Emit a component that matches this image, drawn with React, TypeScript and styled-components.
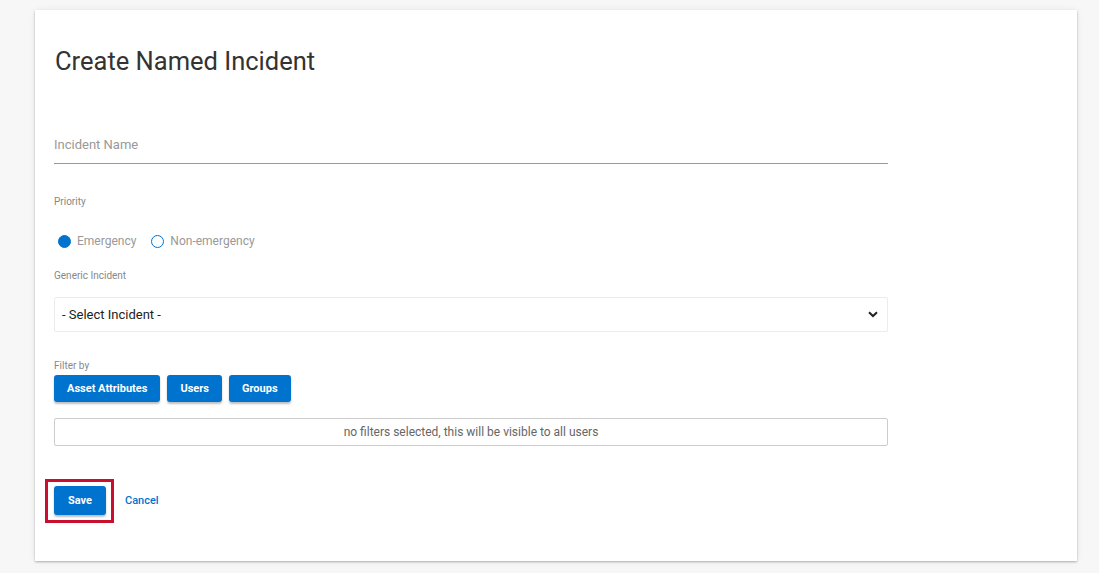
import styled, { createGlobalStyle } from "styled-components";

const GlobalStyle = createGlobalStyle`
  html, body {
    margin: 0;
    padding: 0;
    background-color: #f7f7f7;
    font-family: Roboto, "Liberation Sans", Arial, sans-serif;
  }
  * {
    box-sizing: border-box;
  }
`;

const FILTERS = ["Asset Attributes", "Users", "Groups"];

export default function App() {
  return (
    <>
      <GlobalStyle />
      <Page>
        <Card>
          <Title>Create Named Incident</Title>

          <NameInput placeholder="Incident Name" />

          <FieldLabel $top={32}>Priority</FieldLabel>
          <RadioRow>
            <RadioOption>
              <RadioDot $checked />
              Emergency
            </RadioOption>
            <RadioOption>
              <RadioDot $checked={false} />
              Non-emergency
            </RadioOption>
          </RadioRow>

          <FieldLabel $top={21}>Generic Incident</FieldLabel>
          <SelectWrap>
            <IncidentSelect defaultValue="">
              <option value="">- Select Incident -</option>
            </IncidentSelect>
            <Chevron viewBox="0 0 10 7" aria-hidden>
              <path d="M1 1.2 L5 5 L9 1.2" fill="none" stroke="#222" strokeWidth="2" />
            </Chevron>
          </SelectWrap>

          <FieldLabel $top={28}>Filter by</FieldLabel>
          <FilterButtons>
            {FILTERS.map((label) => (
              <PrimaryButton key={label}>{label}</PrimaryButton>
            ))}
          </FilterButtons>

          <FilterSummary>
            no filters selected, this will be visible to all users
          </FilterSummary>

          <Actions>
            <Highlight>
              <SaveButton>Save</SaveButton>
            </Highlight>
            <CancelLink href="#">Cancel</CancelLink>
          </Actions>
        </Card>
      </Page>
    </>
  );
}

const Page = styled.div`
  padding: 10px 22px 12px 35px;
`;

const Card = styled.div`
  display: flex;
  flex-direction: column;
  width: 1042px;
  height: 551px;
  padding: 34px 20px 0 19px;
  background-color: #fff;
  box-shadow: 0 1px 2px rgba(0, 0, 0, 0.28), 0 0 8px rgba(0, 0, 0, 0.06);
`;

const Title = styled.h1`
  margin: 0 0 0 1px;
  font-size: 25.5px;
  line-height: 34px;
  font-weight: 400;
  color: #333;
`;

const NameInput = styled.input`
  width: 834px;
  height: 31px;
  margin-top: 55px;
  padding: 0 0 8px 0;
  border: none;
  border-bottom: 1px solid #999;
  outline: none;
  font-family: inherit;
  font-size: 13px;
  color: #333;
  background: transparent;

  &::placeholder {
    color: #999;
  }
`;

const FieldLabel = styled.div<{ $top: number }>`
  margin-top: ${({ $top }) => $top}px;
  font-size: 10px;
  line-height: 12px;
  color: #888;
`;

const RadioRow = styled.div`
  display: flex;
  align-items: center;
  gap: 15px;
  height: 16px;
  margin-top: 25px;
  padding-left: 4px;
`;

const RadioOption = styled.label`
  display: flex;
  align-items: center;
  gap: 6px;
  font-size: 12px;
  color: #999;
`;

const RadioDot = styled.span<{ $checked: boolean }>`
  width: 13px;
  height: 13px;
  border-radius: 50%;
  border: 1.5px solid #0073cf;
  background-color: ${({ $checked }) => ($checked ? "#0073cf" : "#fff")};
`;

const SelectWrap = styled.div`
  position: relative;
  width: 834px;
  margin-top: 15px;
`;

const IncidentSelect = styled.select`
  width: 100%;
  height: 35px;
  padding: 0 30px 0 7px;
  border: 1px solid #ececec;
  border-radius: 2px;
  background: #fff;
  appearance: none;
  font-family: inherit;
  font-size: 13px;
  color: #222;
  outline: none;
`;

const Chevron = styled.svg`
  position: absolute;
  right: 10px;
  top: 14px;
  width: 10px;
  height: 7px;
  pointer-events: none;
`;

const FilterButtons = styled.div`
  display: flex;
  gap: 7px;
  margin-top: 3px;
`;

const PrimaryButton = styled.button`
  height: 27px;
  padding: 0 13px;
  border: none;
  border-radius: 3px;
  background-color: #0073cf;
  color: #fff;
  font-family: inherit;
  font-size: 11px;
  font-weight: 700;
  box-shadow: 0 2px 2px rgba(0, 0, 0, 0.25);
  cursor: pointer;
`;

const FilterSummary = styled.div`
  display: flex;
  align-items: center;
  justify-content: center;
  width: 834px;
  height: 28px;
  margin-top: 16px;
  border: 1px solid #ccc;
  border-radius: 2px;
  font-size: 12px;
  color: #666;
`;

const Actions = styled.div`
  display: flex;
  align-items: center;
  gap: 19px;
  margin-top: 40px;
`;

const Highlight = styled.div`
  position: relative;
  display: flex;

  &::after {
    content: "";
    position: absolute;
    top: -7px;
    right: -8px;
    bottom: -8px;
    left: -9px;
    border: 3px solid #c8102e;
    pointer-events: none;
  }
`;

const SaveButton = styled(PrimaryButton)`
  width: 52px;
  height: 29px;
  padding: 0;
`;

const CancelLink = styled.a`
  font-size: 11px;
  font-weight: 500;
  color: #0073cf;
  text-decoration: none;
`;
